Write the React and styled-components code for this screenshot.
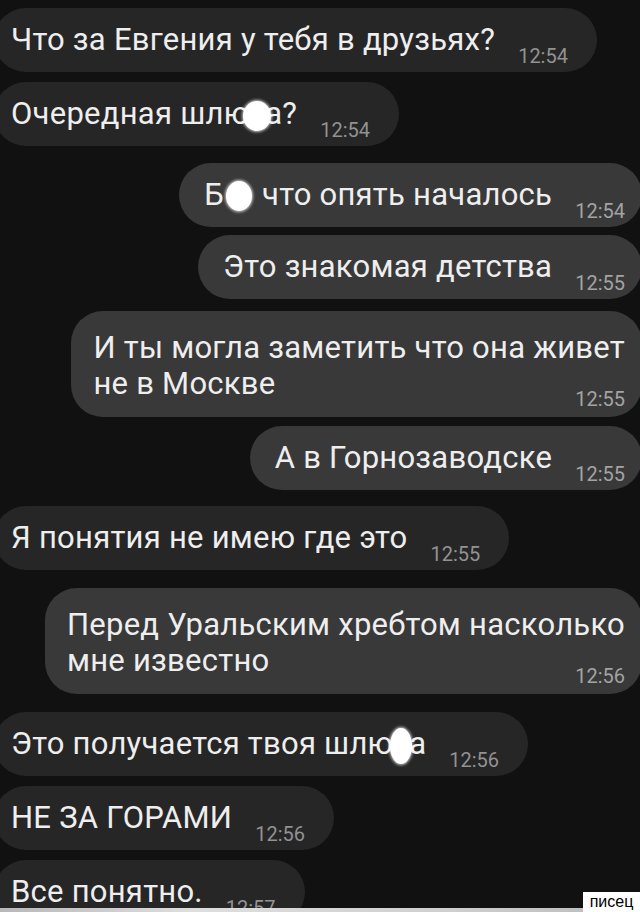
import React from "react";
import styled, { createGlobalStyle } from "styled-components";

const Global = createGlobalStyle`
  html, body { margin: 0; padding: 0; background: #111111; }
  body { width: 640px; height: 912px; overflow: hidden; }
  #root { width: 640px; height: 912px; }
`;

const Screen = styled.div`
  position: relative;
  width: 640px;
  height: 912px;
  overflow: hidden;
  background: #111111;
  font-family: Roboto, "Liberation Sans", Arial, sans-serif;
`;

const Chat = styled.div`
  display: flex;
  flex-direction: column;
  padding-top: 8px;
`;

const Bubble = styled.div`
  align-self: ${(p) => (p.$out ? "flex-end" : "flex-start")};
  margin-top: ${(p) => p.$gap}px;
  margin-left: ${(p) => (p.$out ? 0 : -6)}px;
  margin-right: ${(p) => (p.$out ? -2 : 0)}px;
  box-sizing: border-box;
  background: ${(p) => (p.$out ? "#393939" : "#262626")};
  border-radius: 32px;
  padding: ${(p) =>
    p.$multi
      ? "19px 17px 15px 22px"
      : p.$out
      ? "14px 17px 14px 25px"
      : "14px 29px 14px 17px"};
  display: flex;
  flex-direction: ${(p) => (p.$multi ? "column" : "row")};
  align-items: ${(p) => (p.$multi ? "stretch" : "flex-end")};
  gap: ${(p) => (p.$multi ? 0 : 23)}px;
`;

const Line = styled.div`
  color: #eeeeee;
  font-size: 31px;
  line-height: 36px;
  height: 36px;
  letter-spacing: 0.25px;
  white-space: nowrap;
`;

const LastRow = styled.div`
  display: flex;
  align-items: flex-end;
  justify-content: space-between;
  gap: 23px;
`;

const Time = styled.span`
  color: ${(p) => (p.$out ? "#a3a3a3" : "#929292")};
  font-size: 20px;
  line-height: 20px;
  margin-bottom: ${(p) => (p.$multi ? -7 : -8)}px;
  white-space: nowrap;
`;

const Blot = styled.span`
  position: relative;
  display: inline-block;
  width: ${(p) => p.$w}px;
  height: 0;
  &::after {
    content: "";
    position: absolute;
    left: 50%;
    top: ${(p) => p.$dy}px;
    width: ${(p) => p.$bw}px;
    height: ${(p) => p.$bh}px;
    transform: translate(-50%, -50%);
    background: #ffffff;
    border-radius: 50%;
    box-shadow: 0 0 3px 1px rgba(255, 255, 255, 0.75);
  }
`;

const BottomStrip = styled.div`
  position: absolute;
  left: 0;
  right: 0;
  bottom: 0;
  height: 4px;
  background: linear-gradient(90deg, #b8b8b8, #dedede 30%, #cfcfcf 70%, #b9b9b9);
`;

const Watermark = styled.div`
  position: absolute;
  right: 0;
  bottom: 0;
  width: 57px;
  height: 20px;
  background: #ffffff;
  color: #000000;
  font-family: "Liberation Sans", Arial, sans-serif;
  font-size: 16px;
  line-height: 20px;
  text-align: center;
`;

const messages = [
  { out: false, gap: 0, lines: ["Что за Евгения у тебя в друзьях?"], time: "12:54" },
  {
    out: false,
    gap: 10,
    lines: [
      <>
        Очередная шлю<Blot $w={16} $bw={28} $bh={30} $dy={-8} />а?
      </>,
    ],
    time: "12:54",
  },
  {
    out: true,
    gap: 17,
    lines: [
      <>
        Б<Blot $w={30} $bw={26} $bh={30} $dy={-9} /> что опять началось
      </>,
    ],
    time: "12:54",
  },
  { out: true, gap: 8, lines: ["Это знакомая детства"], time: "12:55" },
  {
    out: true,
    gap: 12,
    lines: ["И ты могла заметить что она живет", "не в Москве"],
    time: "12:55",
  },
  { out: true, gap: 9, lines: ["А в Горнозаводске"], time: "12:55" },
  { out: false, gap: 16, lines: ["Я понятия не имею где это"], time: "12:55" },
  {
    out: true,
    gap: 18,
    lines: ["Перед Уральским хребтом насколько", "мне известно"],
    time: "12:56",
  },
  {
    out: false,
    gap: 18,
    lines: [
      <>
        Это получается твоя шлю<Blot $w={16} $bw={22} $bh={36} $dy={-8} />а
      </>,
    ],
    time: "12:56",
  },
  { out: false, gap: 10, lines: ["НЕ ЗА ГОРАМИ"], time: "12:56" },
  { out: false, gap: 10, lines: ["Все понятно."], time: "12:57" },
];

function Message({ m }) {
  const multi = m.lines.length > 1;
  if (!multi) {
    return (
      <Bubble $out={m.out} $gap={m.gap}>
        <Line>{m.lines[0]}</Line>
        <Time $out={m.out}>{m.time}</Time>
      </Bubble>
    );
  }
  const last = m.lines[m.lines.length - 1];
  return (
    <Bubble $out={m.out} $gap={m.gap} $multi>
      {m.lines.slice(0, -1).map((l, i) => (
        <Line key={i}>{l}</Line>
      ))}
      <LastRow>
        <Line>{last}</Line>
        <Time $out={m.out} $multi>
          {m.time}
        </Time>
      </LastRow>
    </Bubble>
  );
}

export default function App() {
  return (
    <Screen>
      <Global />
      <Chat>
        {messages.map((m, i) => (
          <Message key={i} m={m} />
        ))}
      </Chat>
      <BottomStrip />
      <Watermark>писец</Watermark>
    </Screen>
  );
}
